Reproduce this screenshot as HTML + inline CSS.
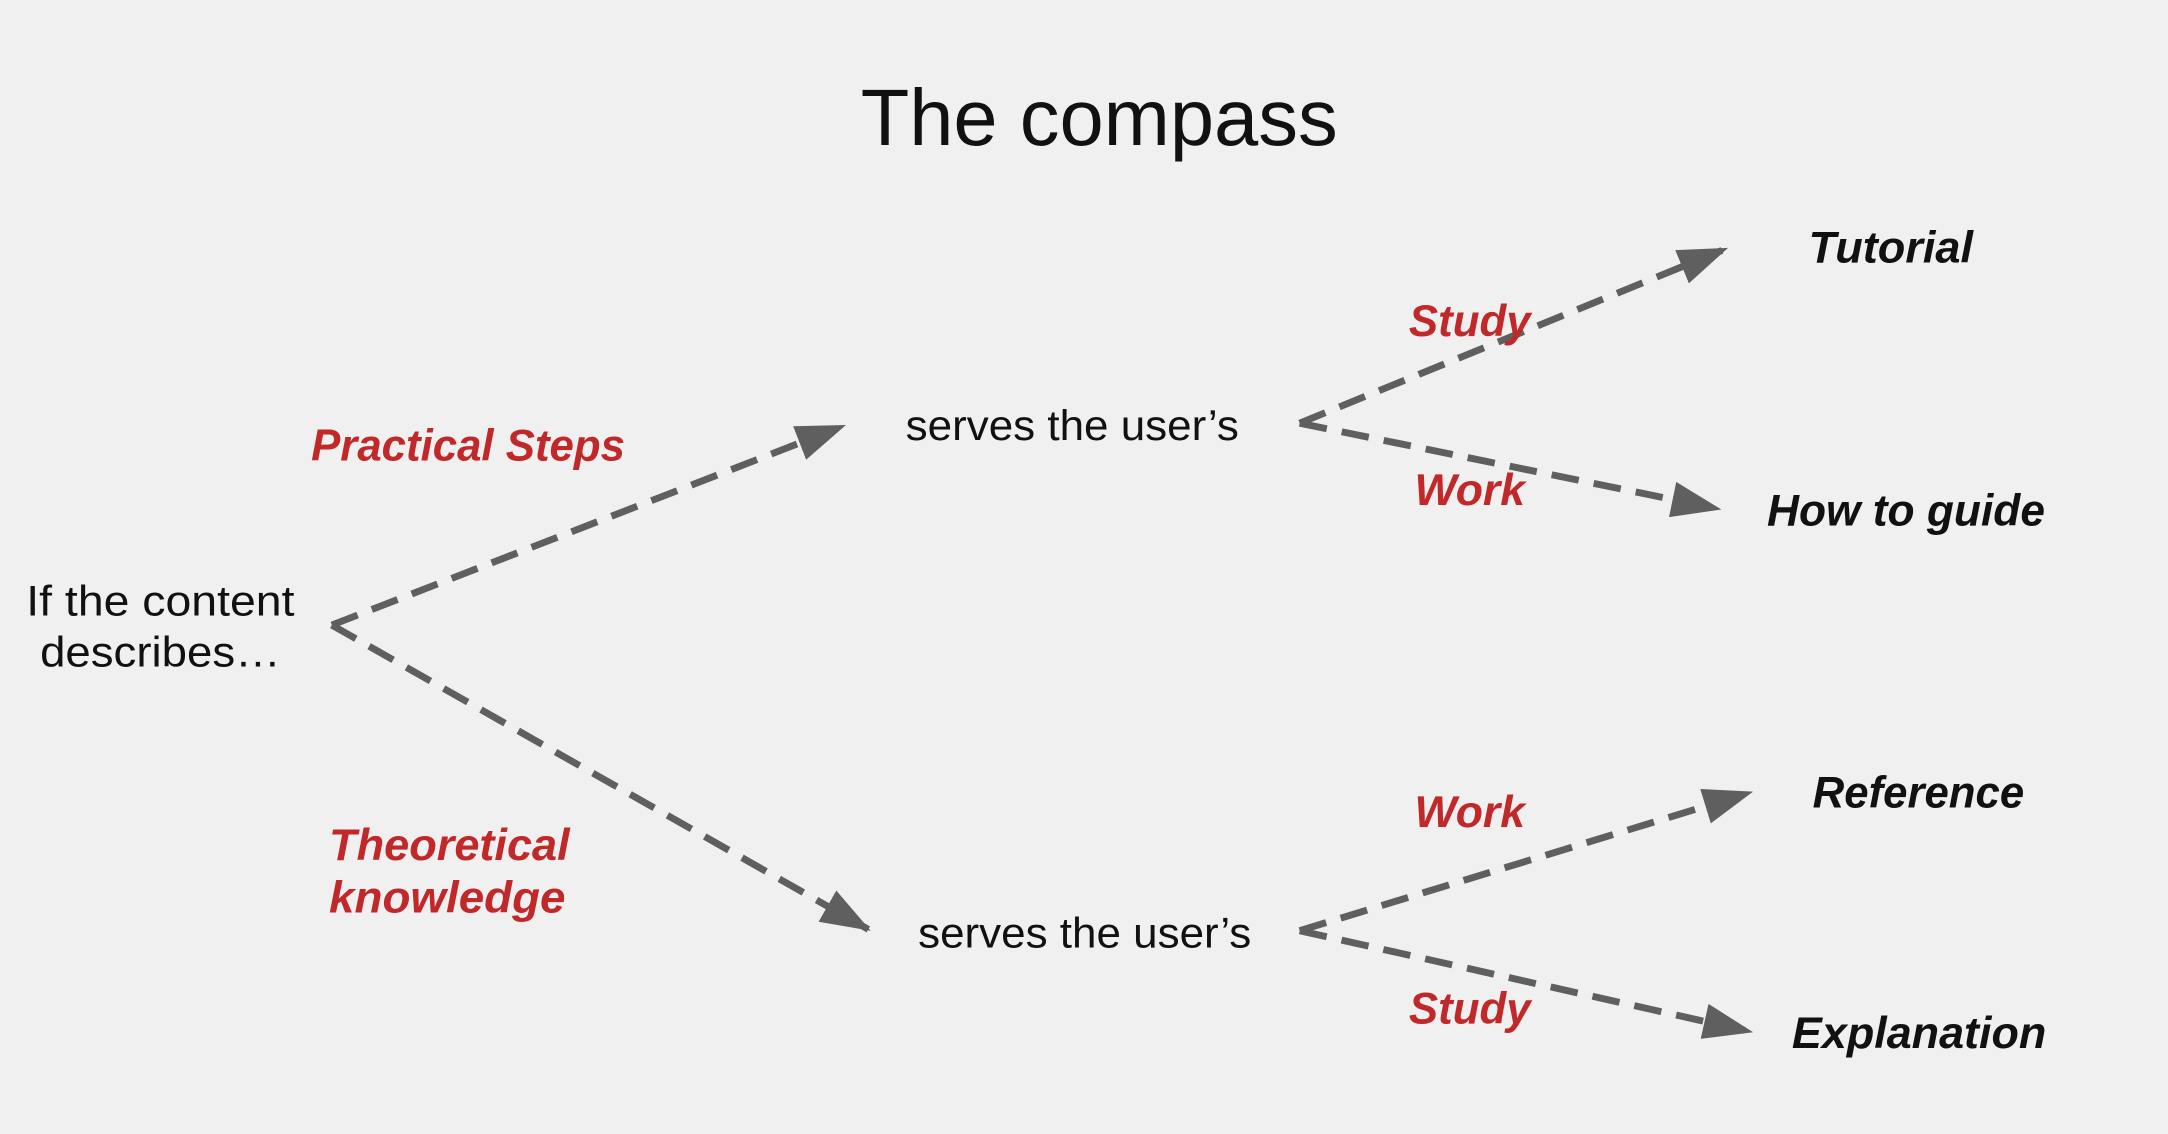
<!DOCTYPE html>
<html><head><meta charset="utf-8"><style>
html,body{margin:0;padding:0;background:#f0f0f0;}
svg{display:block}
text{font-family:"Liberation Sans",sans-serif;}
.b{fill:#111;font-size:31px}
.r{fill:#c0282a;font-size:32px;font-weight:bold;font-style:italic}
.k{fill:#111;font-size:32px;font-weight:bold;font-style:italic}
</style></head><body>
<svg width="2168" height="1134" viewBox="0 0 1568 820" preserveAspectRatio="none">
<defs><marker id="a" markerWidth="10" markerHeight="8" refX="9" refY="4" orient="auto" markerUnits="userSpaceOnUse" viewBox="0 0 10 8"><path d="M0,0L10,4L0,8z" fill="#5f5f5f"/></marker>
<marker id="m" markerWidth="36" markerHeight="26" refX="34" refY="13" orient="auto" markerUnits="userSpaceOnUse"><path d="M0,0L36,13L0,26z" fill="#5f5f5f"/></marker></defs>
<rect width="1568" height="820" fill="#f0f0f0"/>
<text x="795" y="105" text-anchor="middle" font-size="58" fill="#111" textLength="345" lengthAdjust="spacingAndGlyphs">The compass</text>
<g stroke="#5f5f5f" stroke-width="5" fill="none" stroke-dasharray="20 11">
<path d="M240,452L610,308" marker-end="url(#m)"/>
<path d="M240,452L628,672" marker-end="url(#m)"/>
<path d="M940,306L1248,180" marker-end="url(#m)"/>
<path d="M940,306L1243,368" marker-end="url(#m)"/>
<path d="M940,673L1266,573" marker-end="url(#m)"/>
<path d="M940,673L1266,746" marker-end="url(#m)"/>
</g>
<text class="b" x="19" y="445" textLength="194" lengthAdjust="spacingAndGlyphs">If the content</text>
<text class="b" x="29" y="482" textLength="174" lengthAdjust="spacingAndGlyphs">describes…</text>
<text class="r" x="225" y="333" textLength="227" lengthAdjust="spacingAndGlyphs">Practical Steps</text>
<text class="r" x="238" y="622" textLength="174" lengthAdjust="spacingAndGlyphs">Theoretical</text>
<text class="r" x="238" y="660" textLength="171" lengthAdjust="spacingAndGlyphs">knowledge</text>
<text class="b" x="655" y="318" textLength="241" lengthAdjust="spacingAndGlyphs">serves the user’s</text>
<text class="b" x="664" y="685" textLength="241" lengthAdjust="spacingAndGlyphs">serves the user’s</text>
<text class="r" x="1019" y="243" textLength="88" lengthAdjust="spacingAndGlyphs">Study</text>
<text class="r" x="1023" y="365" textLength="80" lengthAdjust="spacingAndGlyphs">Work</text>
<text class="r" x="1023" y="598" textLength="80" lengthAdjust="spacingAndGlyphs">Work</text>
<text class="r" x="1019" y="740" textLength="88" lengthAdjust="spacingAndGlyphs">Study</text>
<text class="k" x="1308" y="190" textLength="119" lengthAdjust="spacingAndGlyphs">Tutorial</text>
<text class="k" x="1278" y="380" textLength="201" lengthAdjust="spacingAndGlyphs">How to guide</text>
<text class="k" x="1311" y="584" textLength="153" lengthAdjust="spacingAndGlyphs">Reference</text>
<text class="k" x="1296" y="758" textLength="184" lengthAdjust="spacingAndGlyphs">Explanation</text>
</svg>
</body></html>
